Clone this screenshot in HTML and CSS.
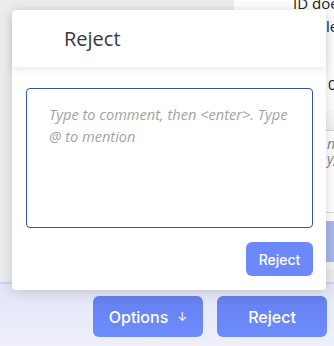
FILE: index.html
```html
<!DOCTYPE html>
<html>
<head>
<meta charset="utf-8">
<link rel="stylesheet" href="styles.css">
</head>
<body>
<div class="page">
  <div class="main">
    <div class="left-area"></div>
    <div class="right-panel">
      <div class="rp-line l1">ID does</div>
      <div class="rp-line l2">le</div>
      <div class="rp-line l3">0.</div>
      <div class="rp-band"></div>
      <div class="rp-comments">
        <div class="rp-it">n</div>
        <div class="rp-it">y,</div>
      </div>
      <div class="rp-btn"></div>
      <div class="rp-foot"></div>
    </div>
  </div>
  <div class="bottom-bar">
    <button class="big-btn">Options <span class="arrow">&#8595;</span></button>
    <button class="big-btn">Reject</button>
  </div>

  <div class="popover">
    <div class="pop-head">Reject</div>
    <div class="pop-body">
      <textarea class="comment" placeholder="Type to comment, then <enter>. Type @ to mention"></textarea>
      <div class="pop-actions">
        <button class="small-btn">Reject</button>
      </div>
    </div>
  </div>
</div>
</body>
</html>
```
FILE: styles.css
```css
* { box-sizing: border-box; }
html, body { margin: 0; padding: 0; }
body { width: 334px; height: 346px; overflow: hidden; font-family: "Open Sans", sans-serif; }

.page { position: relative; width: 334px; height: 346px; display: flex; flex-direction: column; }

.main { height: 282px; display: flex; }
.left-area { width: 234px; background: #ededef; }
.right-panel { flex: 1; background: #fff; display: flex; flex-direction: column; overflow: hidden; font-family: "Open Sans", sans-serif; font-size: 15px; color: #222; }
.rp-line { white-space: nowrap; line-height: 22px; height: 22px; }
.l1 { margin-top: -8px; padding-left: 59px; }
.l2 { margin-top: 1px; padding-left: 92px; }
.l3 { margin-top: 36px; padding-left: 94px; }
.rp-band { height: 21px; margin-top: 15px; background: linear-gradient(#fbfbfb, #f0f0f1); border-bottom: 1px solid #d8d8d8; }
.rp-comments { padding-top: 1px; height: 82px; border-bottom: 1px solid #d6d6d6; margin-bottom: 8px; }
.rp-it { font-style: italic; color: #888; font-size: 14px; line-height: 15px; padding-left: 93px; white-space: nowrap; }
.rp-it:first-child { margin-top: 4px; }
.rp-btn { height: 41px; background: #aab6ee; }
.rp-foot { flex: 1; background: #ececee; border-top: 7px solid #f3f3f4; }

.bottom-bar {
  flex: 1;
  border-top: 2px solid #ccd4f4;
  background: linear-gradient(#e4e6f7, #eeeffb);
  display: flex; justify-content: flex-end; align-items: flex-start;
  gap: 14px; padding: 12px 7px 0 0;
}
.big-btn {
  width: 110px; height: 41px;
  border: none; border-radius: 6px;
  background: linear-gradient(#6680ef, #6e8cfd);
  color: #fff; font-family: Inter, sans-serif; font-size: 16px; font-weight: 500;
  display: flex; align-items: center; justify-content: center; gap: 9px;
}
.arrow { font-size: 12px; font-weight: 400; }

.popover {
  position: absolute; left: 12px; top: 10px; width: 314px; height: 280px;
  background: #fff; border-radius: 4px;
  box-shadow: 0 2px 14px rgba(0,0,0,0.16);
  display: flex; flex-direction: column;
}
.pop-head {
  height: 57px; padding-left: 52px;
  display: flex; align-items: center;
  font-size: 20px; color: #383838;
  border-radius: 4px 4px 0 0;
  box-shadow: 0 3px 8px rgba(0,0,0,0.08);
  position: relative; z-index: 1;
}
.pop-body { flex: 1; padding: 21px 13px 0 14px; display: flex; flex-direction: column; }
.comment {
  width: 287px; height: 140px;
  border: 1px solid #2c55ad; border-radius: 4px;
  padding: 14px 18px 0 22px;
  font-family: "Open Sans", sans-serif; font-style: italic; font-size: 14.6px; line-height: 22px;
  resize: none; outline: none; color: #333;
}
.comment::placeholder { color: #a3a3a3; }
.pop-actions { display: flex; justify-content: flex-end; padding-top: 14px; }
.small-btn {
  width: 67px; height: 34px; border: none; border-radius: 6px;
  background: #6c88fa; color: #fff;
  font-family: Inter, sans-serif; font-size: 14px; font-weight: 500;
}
```
